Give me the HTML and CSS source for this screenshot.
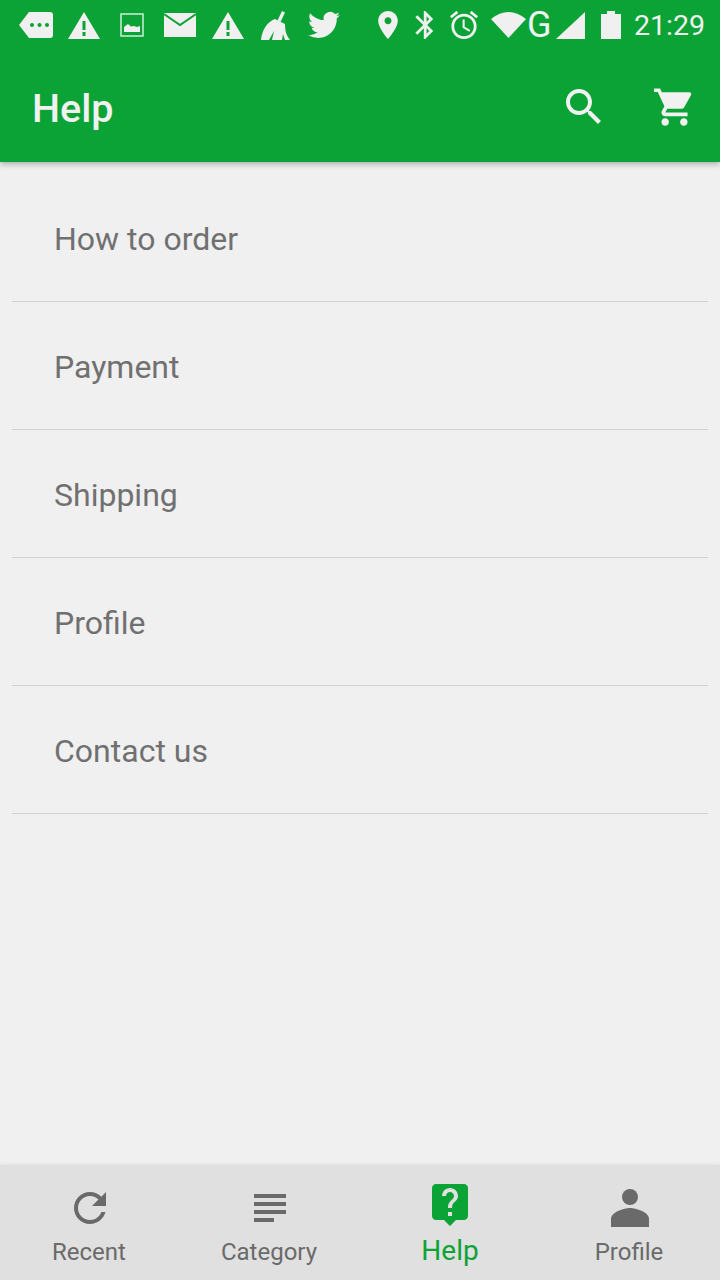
FILE: index.html
```html
<!DOCTYPE html>
<html lang="en">
<head>
    <meta charset="UTF-8">
    <meta name="viewport" content="width=device-width, initial-scale=1.0">
    <title>Help</title>
    <link rel="stylesheet" href="styles.css">
</head>
<body>

    <header class="appbar">
        <!-- Status bar -->
        <div class="status">
            <svg class="st st-msg" viewBox="0 0 34 26"><path fill-rule="evenodd" d="M10 0H31a3 3 0 0 1 3 3v20a3 3 0 0 1-3 3H10L0 13zM13 11a2 2 0 1 0 .01 0zM20.500 11a2 2 0 1 0 .01 0zM28 11a2 2 0 1 0 .01 0z"/></svg>
            <svg class="st st-warn1" viewBox="0 0 32 27"><path fill-rule="evenodd" d="M16 0L32 27H0zM14.500 9v9h3V9zM14.500 20v4h3v-4z"/></svg>
            <svg class="st st-image" viewBox="0 0 24 24"><rect x="1" y="1" width="22" height="22" fill="none" stroke="#cfeed6" stroke-width="1.500"/><path d="M4 19v-5l4-3 3 2.500 3-.5 3 1 3-1v6z"/></svg>
            <svg class="st st-mail" viewBox="0 0 32 24"><rect width="32" height="24"/><path d="M0 1L16 12 32 1" fill="none" stroke="#0ba336" stroke-width="2"/></svg>
            <svg class="st st-warn2" viewBox="0 0 32 27"><path fill-rule="evenodd" d="M16 0L32 27H0zM14.500 9v9h3V9zM14.500 20v4h3v-4z"/></svg>
            <svg class="st st-broom" viewBox="0 0 30 29"><path d="M21 0l3 1.500-4.500 9.500-3-1.500z"/><path d="M0 29C1 19 6 11 14 8l10 5c0 6 1 11 5 16h-5l-2-6-1 6H11l2-9-5 9z"/></svg>
            <svg class="st st-bird" viewBox="0 0 24 24"><path d="M23.953 4.570a10 10 0 0 1-2.825.775 4.958 4.958 0 0 0 2.163-2.723c-.951.555-2.005.959-3.127 1.184a4.920 4.920 0 0 0-8.384 4.482C7.690 8.095 4.067 6.130 1.640 3.162a4.822 4.822 0 0 0-.666 2.475c0 1.710.870 3.213 2.188 4.096a4.904 4.904 0 0 1-2.228-.616v.060a4.923 4.923 0 0 0 3.946 4.827 4.996 4.996 0 0 1-2.212.085 4.936 4.936 0 0 0 4.604 3.417 9.867 9.867 0 0 1-6.102 2.105c-.390 0-.779-.023-1.170-.067a13.995 13.995 0 0 0 7.557 2.209c9.053 0 13.998-7.496 13.998-13.985 0-.210 0-.420-.015-.630A9.935 9.935 0 0 0 24 4.590z"/></svg>
            <svg class="st st-pin" viewBox="5 2 14 20"><path d="M12 2C8.130 2 5 5.130 5 9c0 5.250 7 13 7 13s7-7.750 7-13c0-3.870-3.130-7-7-7zm0 9.500c-1.380 0-2.500-1.120-2.500-2.500s1.120-2.500 2.500-2.500 2.500 1.120 2.500 2.500-1.120 2.500-2.500 2.500z"/></svg>
            <svg class="st st-bt" viewBox="5 2 13 20"><path d="M17.710 7.710L12 2h-1v7.590L6.410 5 5 6.410 10.590 12 5 17.590 6.410 19 11 14.410V22h1l5.710-5.710-4.300-4.290 4.300-4.290zM13 5.830l1.880 1.880L13 9.590V5.830zm1.880 10.460L13 18.170v-3.760l1.880 1.880z"/></svg>
            <svg class="st st-alarm" viewBox="2 2 20 20"><path d="M22 5.720l-4.600-3.860-1.290 1.530 4.600 3.860L22 5.720zM7.880 3.390L6.600 1.860 2 5.710l1.290 1.530 4.590-3.850zM12.500 8H11v6l4.750 2.850.75-1.230-4-2.370V8zM12 4c-4.970 0-9 4.030-9 9s4.020 9 9 9c4.970 0 9-4.030 9-9s-4.030-9-9-9zm0 16c-3.870 0-7-3.130-7-7s3.130-7 7-7 7 3.130 7 7-3.130 7-7 7z"/></svg>
            <svg class="st st-wifi" viewBox="0 0 35 26"><path d="M0 7Q17.500 -7 35 7L17.500 26z"/></svg>
            <span class="st-g">G</span>
            <svg class="st st-signal" viewBox="0 0 29 27"><path d="M29 0V27H0z"/></svg>
            <svg class="st st-battery" viewBox="0 0 20 28"><path d="M6 0h8v3h6v25H0V3h6z"/></svg>
            <span class="st-time">21:29</span>
        </div>

        <!-- Toolbar -->
        <div class="toolbar">
            <h1 class="toolbar-title">Help</h1>
            <svg class="tool-search" viewBox="0 0 24 24"><path d="M15.500 14h-.790l-.280-.270C15.410 12.590 16 11.110 16 9.500 16 5.910 13.090 3 9.500 3S3 5.910 3 9.500 5.910 16 9.500 16c1.610 0 3.090-.590 4.230-1.570l.270.280v.790l5 4.990L20.490 19l-4.990-5zm-6 0C7.010 14 5 11.990 5 9.500S7.010 5 9.500 5 14 7.010 14 9.500 11.990 14 9.500 14z"/></svg>
            <svg class="tool-cart" viewBox="1 2 22 20"><path d="M7 18c-1.100 0-1.990.900-1.990 2S5.900 22 7 22s2-.900 2-2-.900-2-2-2zM1 2v2h2l3.600 7.590-1.350 2.450c-.160.280-.250.610-.250.960 0 1.100.900 2 2 2h12v-2H7.420c-.140 0-.250-.110-.250-.250l.030-.120.900-1.630h7.450c.750 0 1.410-.410 1.750-1.030l3.580-6.470c.080-.140.120-.310.120-.480 0-.550-.450-1-1-1H5.210l-.940-2H1zm16 16c-1.100 0-1.990.900-1.990 2s.890 2 1.990 2 2-.900 2-2-.900-2-2-2z"/></svg>
        </div>
    </header>

    <!-- Help topics -->
    <ul class="topics">
        <li>How to order</li>
        <li>Payment</li>
        <li>Shipping</li>
        <li>Profile</li>
        <li>Contact us</li>
    </ul>

    <!-- Bottom navigation -->
    <nav class="tabs">
        <div class="tab">
            <svg class="tab-icon" viewBox="0 0 24 24"><path d="M17.650 6.350C16.200 4.900 14.210 4 12 4c-4.420 0-7.990 3.580-7.990 8s3.570 8 7.990 8c3.730 0 6.840-2.550 7.730-6h-2.080c-.820 2.330-3.040 4-5.650 4-3.310 0-6-2.690-6-6s2.690-6 6-6c1.660 0 3.140.690 4.220 1.780L13 11h7V4l-2.350 2.350z"/></svg>
            <span class="tab-label">Recent</span>
        </div>
        <div class="tab">
            <svg class="tab-icon" viewBox="0 0 24 24"><path d="M14 17H4v2h10v-2zm6-8H4v2h16V9zM4 15h16v-2H4v2zM4 5v2h16V5H4z"/></svg>
            <span class="tab-label">Category</span>
        </div>
        <div class="tab tab-active">
            <svg class="tab-icon" viewBox="0 0 24 24"><path d="M19 2H5c-1.110 0-2 .900-2 2v14c0 1.100.890 2 2 2h4l3 3 3-3h4c1.100 0 2-.900 2-2V4c0-1.100-.900-2-2-2zm-6 16h-2v-2h2v2zm2.070-7.750l-.900.920C13.450 11.900 13 12.500 13 14h-2v-.500c0-1.100.450-2.100 1.170-2.830l1.240-1.260c.370-.360.590-.860.590-1.410 0-1.100-.900-2-2-2s-2 .900-2 2H8c0-2.210 1.790-4 4-4s4 1.790 4 4c0 .880-.360 1.680-.930 2.250z"/></svg>
            <span class="tab-label">Help</span>
        </div>
        <div class="tab">
            <svg class="tab-icon" viewBox="0 0 48 48"><circle cx="24" cy="13" r="8"/><path d="M5 43v-8c0-7 13-11 19-11s19 4 19 11v8z"/></svg>
            <span class="tab-label">Profile</span>
        </div>
    </nav>

</body>
</html>
```

FILE: styles.css
```css
* {
    box-sizing: border-box;
}

body {
    font-family: Roboto, "Liberation Sans", sans-serif;
    display: flex;
    flex-direction: column;
    width: 720px;
    height: 1280px;
    margin: 0;
    overflow: hidden;
    background-color: #f0f0f0;
}

.appbar {
    position: relative;
    height: 162px;
    background-color: #0ba336;
    box-shadow: 0 2px 6px rgba(0, 0, 0, 0.3);
    color: #f1f1f1;
}

/* Status bar */
.status {
    display: flex;
    align-items: center;
    height: 50px;
    padding-left: 19px;
}

.st {
    flex: none;
    fill: #f0f0f0;
}

.st-msg { width: 34px; height: 26px; }
.st-warn1 { width: 32px; height: 27px; margin-left: 15px; }
.st-image { width: 24px; height: 24px; margin-left: 20px; }
.st-mail { width: 32px; height: 24px; margin-left: 20px; }
.st-warn2 { width: 32px; height: 27px; margin-left: 16px; }
.st-broom { width: 30px; height: 29px; margin-left: 17px; }
.st-bird { width: 32px; height: 32px; margin-left: 17px; }
.st-pin { width: 20px; height: 28px; margin-left: 38px; }
.st-bt { width: 19px; height: 28px; margin-left: 17px; }
.st-alarm { width: 28px; height: 28px; margin-left: 16px; }
.st-wifi { width: 35px; height: 26px; margin-left: 13px; }
.st-signal { width: 29px; height: 27px; margin-left: 4px; }
.st-battery { width: 20px; height: 28px; margin-left: 16px; }

.st-g {
    width: 25px;
    margin-left: 1px;
    font-size: 36px;
    line-height: 50px;
}

.st-time {
    margin-left: 13px;
    padding-top: 2px;
    font-size: 28.500px;
    line-height: 50px;
}

/* Toolbar */
.toolbar {
    display: flex;
    align-items: center;
    height: 112px;
    padding-left: 32px;
}

.toolbar-title {
    flex: 1;
    margin: 0;
    padding-top: 5px;
    font-size: 39.500px;
    font-weight: 500;
}

.toolbar svg {
    flex: none;
    fill: #f1f1f1;
}

.tool-search {
    width: 48px;
    height: 48px;
    margin-top: 2px;
}

.tool-cart {
    width: 41px;
    height: 40px;
    margin: 0 25px 0 46px;
    margin-top: 1px;
}

/* Help topics */
.topics {
    flex: 1;
    list-style-type: none;
    margin: 12px 12px 0;
    padding: 0;
}

.topics li {
    display: flex;
    align-items: center;
    height: 128px;
    padding: 2px 0 0 42px;
    border-bottom: 1px solid #d2d2d2;
    color: #707070;
    font-size: 32px;
}

/* Bottom navigation */
.tabs {
    display: grid;
    grid-template-columns: repeat(4, 1fr);
    height: 115px;
    background-color: #e0e0e0;
    box-shadow: 0 -1px 3px rgba(0, 0, 0, 0.06);
}

.tab {
    display: flex;
    flex-direction: column;
    align-items: center;
    padding-top: 19px;
    color: #6a6a6a;
}

.tab-icon {
    width: 48px;
    height: 48px;
    fill: #6a6a6a;
}

.tab-label {
    margin: 3px 2px 0 0;
    font-size: 24px;
    line-height: 34px;
}

.tab-active {
    padding-top: 15px;
    color: #0ba336;
}

.tab-active .tab-icon {
    fill: #0ba336;
}

.tab-active .tab-label {
    margin: 4px 0 0;
    font-size: 28px;
    line-height: 38px;
}
```
